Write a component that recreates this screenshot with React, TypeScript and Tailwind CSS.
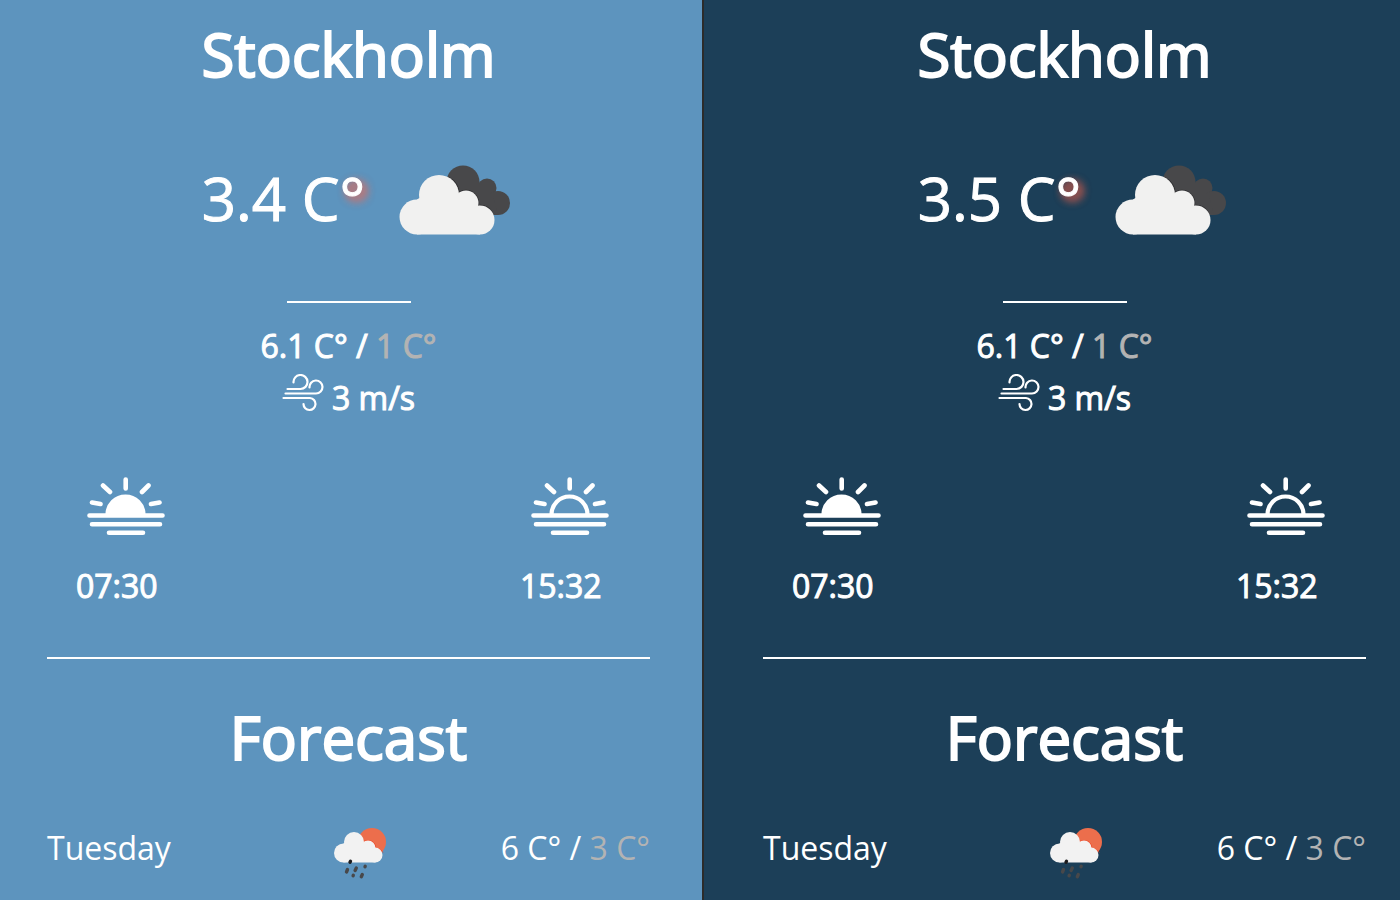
import React from "react";

function CloudIcon() {
  return (
    <svg className="block" width="112" height="70" viewBox="0 0 112 70" aria-hidden="true">
      <g fill="#48484a">
        <circle cx="64" cy="17" r="16.5" />
        <circle cx="88" cy="23" r="9.5" />
        <circle cx="99" cy="38" r="12" />
        <path d="M48 17h32l14 14 5 19H60z" />
      </g>
      <g fill="none" stroke="#2e2e30" strokeWidth="1.500">
        <circle cx="67" cy="38" r="12.5" />
        <path d="M81 40.500a14.500 14.500 0 0 1 12.500 7.500" />
        <path d="M50 12.700a20 20 0 0 1 10 15.300" />
      </g>
      <g fill="#f1f1f0">
        <circle cx="40" cy="30" r="20" />
        <circle cx="67" cy="38" r="12.5" />
        <circle cx="18" cy="52" r="17.5" />
        <circle cx="81" cy="55" r="14.500" />
        <path d="M18 34.500l22-14 27 14 14 10v25H18z" />
      </g>
    </svg>
  );
}

function RainIcon() {
  return (
    <svg className="block" width="54" height="52" viewBox="0 0 54 52" aria-hidden="true">
      <circle cx="38" cy="14" r="14" fill="#ec6e4c" />
      <path d="M29 14.500q1-2 5-2 7 0 8 8 5 0 7 4" fill="none" stroke="#ee4b2b" />
      <g fill="#f2f2f2">
        <circle cx="20" cy="14" r="10" />
        <circle cx="34" cy="20" r="7.500" />
        <circle cx="9.500" cy="25" r="9.500" />
        <circle cx="41" cy="27" r="7.500" />
        <path d="M9.500 15.500l11-8 14 12 7 7v8h-32z" />
      </g>
      <g strokeWidth="3.400" strokeLinecap="round">
        <path d="M16.500 33.300l-.5 1" stroke="#1c1c1e" />
        <path d="M13.500 41.500l-1 2.500M22.300 40l-1.200 2.500M31.200 38.300l-.2.4M19.300 47.300l-.2.4M28.300 46.500l-1 2.200" stroke="#48484a" />
      </g>
    </svg>
  );
}

function WindIcon() {
  return (
    <svg className="block" width="42" height="38" viewBox="0 0 42 38" fill="none" stroke="#fff" strokeWidth="2.200" strokeLinecap="round" aria-hidden="true">
      <path d="M5.500 15H18.500a7 7 0 1 0-7-6.500M3.500 19.500H34a6.500 6.500 0 1 0-6.500-6M1.500 24H28a6 6 0 1 1-6.500 6" />
    </svg>
  );
}

function SunIcon({ filled }: { filled: boolean }) {
  return (
    <svg className="block" width="80" height="60" viewBox="0 0 80 60" fill="none" stroke="#fff" strokeWidth="4.600" strokeLinecap="round" aria-hidden="true">
      <path d="M21.500 38v-.5a18 18 0 0 1 36 0v.5" fill={filled ? "#fff" : "none"} strokeWidth="4.200" />
      <path d="M3.500 38.500H76.500M6 47.200H74M23 55.800H57M39.700 2.500V11.500M17 8.500l7 6.500M62.500 8.500l-6.500 6.500M6 25.500l8.500 1.500M73.500 25.500l-8.500 1.500" />
    </svg>
  );
}

type WeatherProps = { className: string; temp: string };

function Weather({ className, temp }: WeatherProps) {
  return (
    <section className={"flex min-h-screen flex-col items-center " + className}>
      <h1 className="mt-3 text-[60px] leading-[84px] [-webkit-text-stroke:2px_#fff]">Stockholm</h1>
      <div className="mt-[60px] flex h-[88px] items-center gap-[34px] pl-4">
        <p className="pb-1 text-[60px] leading-[84px] [-webkit-text-stroke:1px_#fff]">
          {temp}
          <span className="[text-shadow:4px_4px_8px_#ff6347,4px_4px_10px_#ff634780]">°</span>
        </p>
        <CloudIcon />
      </div>
      <hr className="mt-[57px] w-[124px] border-t-2 border-white" />
      <p className="mt-5 text-[32px] leading-[46px] [-webkit-text-stroke:1px_#fff]">
        6.1 C° / <span className="text-[#b3b3b3] [-webkit-text-stroke:1px_#b3b3b3]">1 C°</span>
      </p>
      <div className="mt-1 flex items-center gap-2">
        <div className="pb-2.5"><WindIcon /></div>
        <p className="text-[32px] leading-[50px] [-webkit-text-stroke:1px_#fff]">3 m/s</p>
      </div>
      <div className="mt-[54px] flex w-full justify-between pr-12 pl-[29px]">
        <div className="flex flex-col gap-[26px]">
          <div className="w-[82px] pl-2.5"><SunIcon filled /></div>
          <time className="text-[32px] leading-[46px] [-webkit-text-stroke:1px_#fff]">07:30</time>
        </div>
        <div className="flex flex-col gap-[26px]">
          <div className="w-[82px] pl-2.5"><SunIcon filled={false} /></div>
          <time className="text-[32px] leading-[46px] [-webkit-text-stroke:1px_#fff]">15:32</time>
        </div>
      </div>
      <hr className="mt-12 w-full border-t-2 border-white" />
      <h2 className="mt-9 text-[60px] leading-[84px] [-webkit-text-stroke:2px_#fff]">Forecast</h2>
      <div className="mt-[46px] grid w-full grid-cols-3 items-start text-[32px] leading-[46px]">
        <p>Tuesday</p>
        <div className="mt-[3px] flex justify-center pl-6"><RainIcon /></div>
        <p className="text-right">
          6 C° / <span className="text-[#b3b3b3]">3 C°</span>
        </p>
      </div>
    </section>
  );
}

export default function App() {
  return (
    <main className="flex bg-[#2b2b2b] font-['Open_Sans',sans-serif] text-white">
      <Weather className="w-[702px] grow bg-[#5d94be] pr-[52px] pl-[47px]" temp="3.4 C" />
      <div className="w-0.5 shrink-0" />
      <Weather className="w-[696px] grow bg-[#1c3f58] pr-[34px] pl-[59px]" temp="3.5 C" />
    </main>
  );
}
